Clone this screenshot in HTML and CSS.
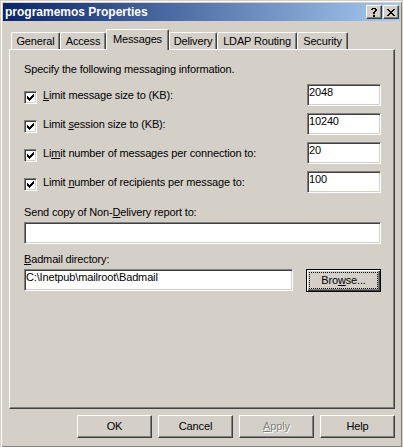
FILE: index.html
```html
<!DOCTYPE html>
<html lang="en">
<head>
  <meta charset="UTF-8" />
  <title>programemos Properties</title>
  <link rel="stylesheet" href="styles.css">
</head>
<body>
  <div class="window">
    <div class="titlebar">
      <span class="title">programemos Properties</span>
      <div class="caption-buttons">
        <span class="cap-btn">
          <svg width="6" height="9" viewBox="0 0 6 9" shape-rendering="crispEdges"><path d="M1 0h4v1H1z M0 1h2v1H0z M4 1h2v2H4z M3 3h2v1H3z M2 4h2v2H2z M2 7h2v2H2z"/></svg>
        </span>
        <span class="cap-btn">
          <svg width="8" height="7" viewBox="0 0 8 7" shape-rendering="crispEdges"><path d="M0 0h2v1H0z M6 0h2v1H6z M1 1h2v1H1z M5 1h2v1H5z M2 2h4v1H2z M3 3h2v1H3z M2 4h4v1H2z M1 5h2v1H1z M5 5h2v1H5z M0 6h2v1H0z M6 6h2v1H6z"/></svg>
        </span>
      </div>
    </div>

    <div class="client">
      <div class="tabs">
        <div class="tab tab-general">General</div>
        <div class="tab tab-access">Access</div>
        <div class="tab tab-messages active">Messages</div>
        <div class="tab tab-delivery">Delivery</div>
        <div class="tab tab-ldap">LDAP Routing</div>
        <div class="tab tab-security">Security</div>
      </div>

      <div class="panel">
        <p class="intro">Specify the following messaging information.</p>

        <div class="limits">
          <div class="limit-row">
            <label class="check"><span class="checkbox"><svg width="7" height="7" viewBox="0 0 7 7" shape-rendering="crispEdges"><path d="M0 2h1v3H0z M1 3h1v3H1z M2 4h1v3H2z M3 3h1v3H3z M4 2h1v3H4z M5 1h1v3H5z M6 0h1v3H6z"/></svg></span><span><u>L</u>imit message size to (KB):</span></label>
            <div class="edit num">2048</div>
          </div>
          <div class="limit-row">
            <label class="check"><span class="checkbox"><svg width="7" height="7" viewBox="0 0 7 7" shape-rendering="crispEdges"><path d="M0 2h1v3H0z M1 3h1v3H1z M2 4h1v3H2z M3 3h1v3H3z M4 2h1v3H4z M5 1h1v3H5z M6 0h1v3H6z"/></svg></span><span>Limit <u>s</u>ession size to (KB):</span></label>
            <div class="edit num">10240</div>
          </div>
          <div class="limit-row">
            <label class="check"><span class="checkbox"><svg width="7" height="7" viewBox="0 0 7 7" shape-rendering="crispEdges"><path d="M0 2h1v3H0z M1 3h1v3H1z M2 4h1v3H2z M3 3h1v3H3z M4 2h1v3H4z M5 1h1v3H5z M6 0h1v3H6z"/></svg></span><span>Li<u>m</u>it number of messages per connection to:</span></label>
            <div class="edit num">20</div>
          </div>
          <div class="limit-row">
            <label class="check"><span class="checkbox"><svg width="7" height="7" viewBox="0 0 7 7" shape-rendering="crispEdges"><path d="M0 2h1v3H0z M1 3h1v3H1z M2 4h1v3H2z M3 3h1v3H3z M4 2h1v3H4z M5 1h1v3H5z M6 0h1v3H6z"/></svg></span><span>Limit <u>n</u>umber of recipients per message to:</span></label>
            <div class="edit num">100</div>
          </div>
        </div>

        <div class="field">
          <div class="field-label">Send copy of Non-<u>D</u>elivery report to:</div>
          <div class="edit"></div>
        </div>

        <div class="field field-badmail">
          <div class="field-label"><u>B</u>admail directory:</div>
          <div class="browse-row">
            <div class="edit path">C:\Inetpub\mailroot\Badmail</div>
            <button class="btn default">Bro<u>w</u>se...</button>
          </div>
        </div>
      </div>

      <div class="actions">
        <button class="btn">OK</button>
        <button class="btn">Cancel</button>
        <button class="btn" disabled><u>A</u>pply</button>
        <button class="btn">Help</button>
      </div>
    </div>
  </div>
</body>
</html>
```

FILE: styles.css
```css
html, body {
  margin: 0;
  overflow: hidden;
}
body {
  font-family: Tahoma, "Liberation Sans", Arial, sans-serif;
  font-size: 11px;
  line-height: 13px;
  letter-spacing: -0.15px;
  color: #000;
  background: #d4d0c8;
}
.window {
  box-sizing: border-box;
  width: 403px;
  height: 448px;
  padding: 2px;
  border: 1px solid;
  border-color: #d4d0c8 #d4d0c8 #404040 #d4d0c8;
  box-shadow: inset 1px 1px #fff, inset -1px -1px #808080;
  background: #d4d0c8;
  display: flex;
  flex-direction: column;
}
.titlebar {
  height: 18px;
  display: flex;
  align-items: center;
  justify-content: space-between;
  padding-left: 2px;
  background: linear-gradient(to right, #0a246a, #a6caf0);
}
.title {
  color: #fff;
  font-weight: bold;
  font-size: 12px;
  line-height: 18px;
  letter-spacing: 0;
}
.caption-buttons {
  display: flex;
  gap: 1px;
  margin-right: 1px;
}
.cap-btn {
  box-sizing: border-box;
  width: 16px;
  height: 14px;
  display: flex;
  align-items: center;
  justify-content: center;
  background: #d4d0c8;
  border: 1px solid;
  border-color: #fff #404040 #404040 #fff;
  box-shadow: inset -1px -1px #808080;
}
.client {
  flex: 1;
  display: flex;
  flex-direction: column;
  padding: 8px 5px 7px 6px;
}

/* tabs */
.tabs {
  display: flex;
  align-items: flex-end;
  height: 21px;
  margin: 0 0 -1px 2px;
}
.tab {
  box-sizing: border-box;
  height: 17px;
  margin-bottom: 1px;
  padding-top: 2px;
  text-align: center;
  white-space: nowrap;
  border-top: 1px solid #fff;
  border-left: 1px solid #fff;
  border-right: 1px solid #404040;
  box-shadow: inset -1px 0 #808080;
  border-radius: 2px 2px 0 0;
}
.tab.active {
  height: 21px;
  margin-bottom: 0;
  padding-top: 3px;
  position: relative;
  z-index: 1;
  background: #d4d0c8;
}
.tab-general { width: 49px; }
.tab-access { width: 46px; }
.tab-messages { width: 63px; }
.tab-delivery { width: 48px; }
.tab-ldap { width: 80px; }
.tab-security { width: 51px; }

.panel {
  box-sizing: border-box;
  height: 360px;
  padding: 13px 13px 0 14px;
  border: 1px solid;
  border-color: #fff #404040 #404040 #fff;
  box-shadow: inset -1px -1px #808080;
}
.intro {
  margin: 0 0 8px;
}
.limits {
  display: flex;
  flex-direction: column;
  gap: 7px;
  margin-bottom: 13px;
}
.limit-row {
  display: flex;
  justify-content: space-between;
  align-items: flex-start;
  height: 22px;
}
.check {
  display: flex;
  align-items: flex-start;
  gap: 6px;
  margin-top: 5px;
}
.checkbox {
  box-sizing: border-box;
  width: 13px;
  height: 13px;
  margin-top: 2px;
  display: flex;
  align-items: center;
  justify-content: center;
  background: #fff;
  border: 1px solid;
  border-color: #808080 #fff #fff #808080;
  box-shadow: inset 1px 1px #404040, inset -1px -1px #d4d0c8;
}
.edit {
  box-sizing: border-box;
  height: 22px;
  padding: 1px 2px 0 1px;
  background: #fff;
  border: 1px solid;
  border-color: #808080 #fff #fff #808080;
  box-shadow: inset 1px 1px #404040, inset -1px -1px #d4d0c8;
  white-space: nowrap;
  overflow: hidden;
}
.edit.num {
  width: 74px;
}
.field-label {
  margin-bottom: 3px;
}
.field-badmail {
  margin-top: 9px;
}
.browse-row {
  display: flex;
  gap: 13px;
}
.edit.path {
  flex: 1;
}

/* push buttons */
.btn {
  box-sizing: border-box;
  width: 75px;
  height: 23px;
  padding: 0;
  font: inherit;
  line-height: 13px;
  letter-spacing: inherit;
  color: #000;
  background: #d4d0c8;
  border: 1px solid;
  border-color: #fff #404040 #404040 #fff;
  box-shadow: inset -1px -1px #808080;
}
.btn.default {
  border-color: #000;
  box-shadow: inset 1px 1px #fff, inset -1px -1px #404040, inset -2px -2px #808080;
  outline: 1px dotted #000;
  outline-offset: -4px;
}
.btn:disabled {
  color: #808080;
  text-shadow: 1px 1px #fff;
}
.actions {
  display: flex;
  justify-content: flex-end;
  gap: 6px;
  margin-top: 6px;
}
```
